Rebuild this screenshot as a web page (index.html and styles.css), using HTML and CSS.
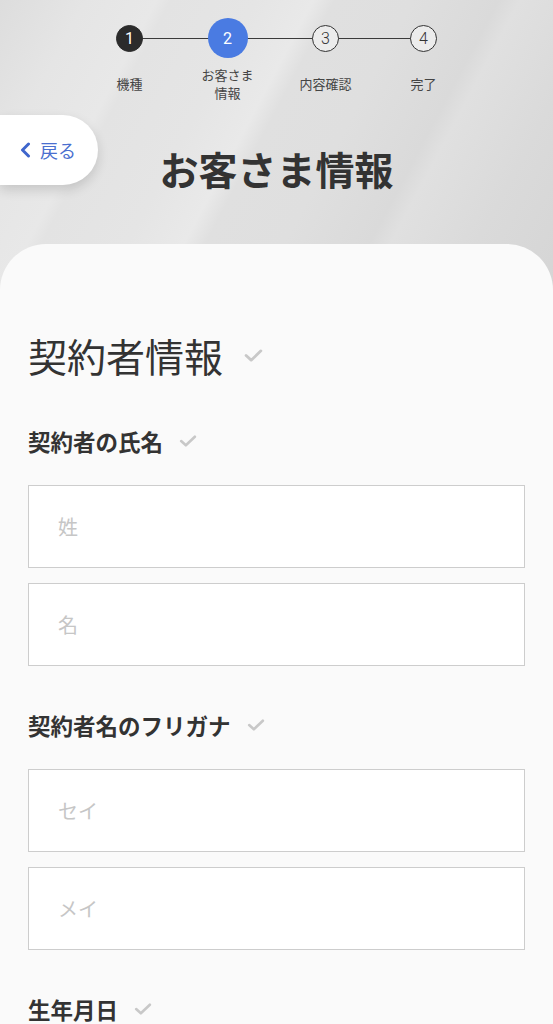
FILE: index.html
```html
<!DOCTYPE html>
<html lang="ja">
<head>
<meta charset="utf-8">
<title>お客さま情報</title>
<link rel="stylesheet" href="styles.css">
</head>
<body>
<div class="page">
<header class="hero">
  <ol class="stepper">
    <li class="step done"><span class="dot">1</span><span class="label">機種</span></li>
    <li class="step current"><span class="dot">2</span><span class="label">お客さま<br>情報</span></li>
    <li class="step"><span class="dot">3</span><span class="label">内容確認</span></li>
    <li class="step"><span class="dot">4</span><span class="label">完了</span></li>
  </ol>
  <a class="back" href="#">
    <svg class="chev" viewBox="0 0 12 16" width="12" height="16"><path d="M9.5 2 L3.5 8 L9.5 14" fill="none" stroke="#3f66cc" stroke-width="3" stroke-linecap="round" stroke-linejoin="round"/></svg>
    <span>戻る</span>
  </a>
  <h1 class="title">お客さま情報</h1>
</header>
<main class="card">
  <h2 class="section">契約者情報<svg class="check big" viewBox="0 0 20 14" width="19" height="13"><path d="M2 7 L7.5 12 L18 2" fill="none" stroke="#c8c8c8" stroke-width="3" stroke-linecap="round" stroke-linejoin="round"/></svg></h2>

  <div class="field">
    <h3 class="flabel">契約者の氏名<svg class="check" viewBox="0 0 20 14" width="18" height="12"><path d="M2 7 L7.5 12 L18 2" fill="none" stroke="#c8c8c8" stroke-width="3" stroke-linecap="round" stroke-linejoin="round"/></svg></h3>
    <input class="box" type="text" placeholder="姓">
    <input class="box" type="text" placeholder="名">
  </div>

  <div class="field">
    <h3 class="flabel">契約者名のフリガナ<svg class="check" viewBox="0 0 20 14" width="18" height="12"><path d="M2 7 L7.5 12 L18 2" fill="none" stroke="#c8c8c8" stroke-width="3" stroke-linecap="round" stroke-linejoin="round"/></svg></h3>
    <input class="box" type="text" placeholder="セイ">
    <input class="box" type="text" placeholder="メイ">
  </div>

  <div class="field">
    <h3 class="flabel">生年月日<svg class="check" viewBox="0 0 20 14" width="18" height="12"><path d="M2 7 L7.5 12 L18 2" fill="none" stroke="#c8c8c8" stroke-width="3" stroke-linecap="round" stroke-linejoin="round"/></svg></h3>
  </div>
</main>
</div>
</body>
</html>
```
FILE: styles.css
```css
* { box-sizing: border-box; }
html, body { margin: 0; padding: 0; }
body {
  font-family: "Noto Sans CJK JP", "Noto Sans", sans-serif;
  color: #333;
  background: #fafafa;
}
.page {
  background:
    linear-gradient(118deg,
      #dddddd 0%, #e5e5e5 12%, #e8e8e8 22%, #e3e3e3 24%,
      #e5e5e5 36%, #e9e9e9 44%, #e0e0e0 47%,
      #dfdfdf 58%, #dadada 70%, #e0e0e0 73%,
      #dadada 85%, #d5d5d5 100%) top / 100% 300px no-repeat,
    #fafafa;
}
.hero {
  position: relative;
  padding: 18px 0 51px;
}
.stepper {
  list-style: none;
  margin: 0 auto;
  padding: 0;
  width: 392px;
  display: flex;
}
.step {
  position: relative;
  width: 98px;
  display: flex;
  flex-direction: column;
  align-items: center;
}
.step + .step::before {
  content: "";
  position: absolute;
  top: 19.5px;
  left: -49px;
  width: 98px;
  height: 1.2px;
  background: #3a3a3a;
  z-index: 0;
}
.dot {
  position: relative;
  z-index: 1;
  width: 27px;
  height: 27px;
  margin: 6.5px 0;
  border-radius: 50%;
  border: 1.3px solid #333;
  background: #ececec;
  display: flex;
  align-items: center;
  justify-content: center;
  font-family: Roboto, "Noto Sans", sans-serif;
  font-size: 16px;
  font-weight: 300;
  color: #333;
}
.step.done .dot { background: #2b2b2b; border-color: #2b2b2b; color: #fff; font-weight: 400; }
.step.current .dot {
  width: 40px; height: 40px; margin: 0;
  background: #4a7be2; border: none; color: #fff; font-size: 16px; font-weight: 400;
}
.label {
  margin-top: 8px;
  height: 36px;
  display: flex;
  align-items: center;
  text-align: center;
  font-size: 13px;
  line-height: 18px;
  color: #444;
}
.back {
  position: absolute;
  left: 0;
  top: 115px;
  width: 98px;
  height: 70px;
  background: #fff;
  border-radius: 0 35px 35px 0;
  box-shadow: 0 5px 12px rgba(0,0,0,0.14);
  display: flex;
  align-items: center;
  padding-left: 19px;
  gap: 9px;
  text-decoration: none;
  color: #4a6fcf;
  font-size: 18px;
}
.chev { display: block; }
.title {
  margin: 41px 0 0;
  text-align: center;
  font-size: 39px;
  line-height: 50px;
  font-weight: 700;
  color: #333;
}
.card {
  background: #fafafa;
  border-radius: 46px 46px 0 0;
  padding: 84px 28px 40px;
}
.section {
  margin: 0;
  font-size: 39px;
  line-height: 54px;
  font-weight: 400;
  color: #333;
  display: flex;
  align-items: center;
}
.check { margin-left: 16px; display: block; }
.check.big { margin-left: 21px; }
.field { margin-top: 44px; display: flex; flex-direction: column; }
.flabel {
  margin: 0 0 29px;
  font-size: 22.5px;
  line-height: 30px;
  font-weight: 700;
  color: #333;
  display: flex;
  align-items: center;
}
.box {
  display: block;
  width: 100%;
  height: 83px;
  border: 1px solid #cdcdcd;
  border-radius: 0;
  background: #fff;
  padding: 0 29px;
  font-family: "Noto Sans CJK JP", "Noto Sans", sans-serif;
  font-size: 20px;
  color: #333;
  outline: none;
}
.box + .box { margin-top: 15px; }
.box::placeholder { color: #c6c6c6; }
```
